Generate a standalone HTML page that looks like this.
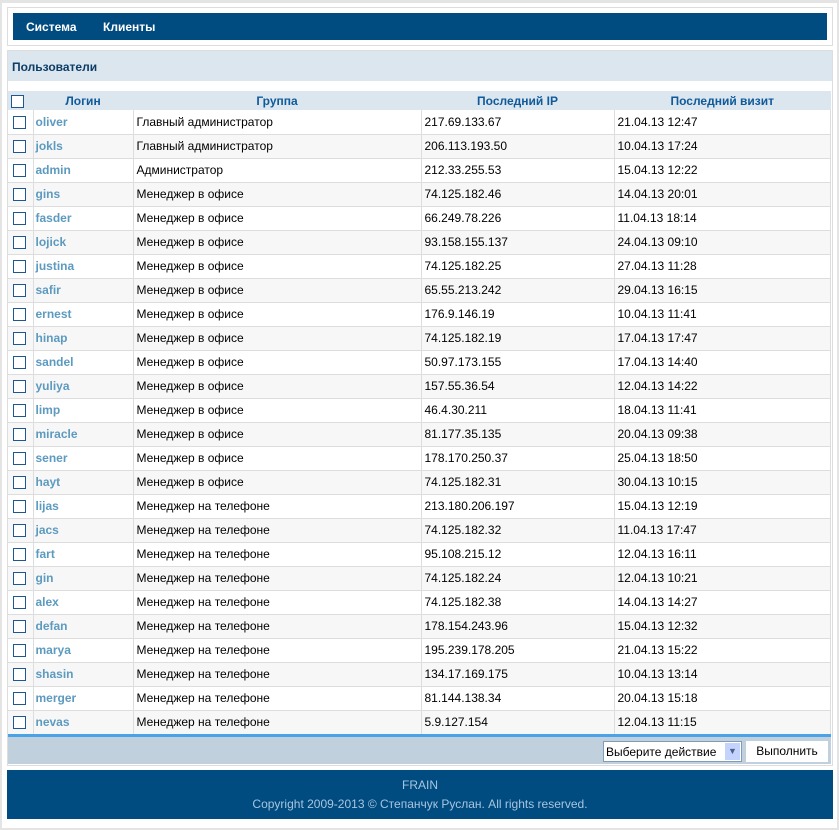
<!DOCTYPE html>
<html><head><meta charset="utf-8"><style>
*{margin:0;padding:0;box-sizing:border-box}
body{width:839px;height:830px;background:#fff;font-family:"Liberation Sans",Arial,sans-serif;font-size:12px;position:relative;overflow:hidden}
.outer{position:absolute;left:0;top:0;width:839px;height:830px;border:2px solid #e4e4e4;border-top-width:3px}
.navbox{position:absolute;left:7px;top:7px;width:826px;height:39px;border:1px solid #ddd}
.nav{position:absolute;left:13px;top:13px;width:814px;height:27px;background:#004b80;color:#fff;font-weight:bold;font-size:12px}
.nav span{position:absolute;top:7px}
.panel{position:absolute;left:7px;top:50px;width:826px;height:716px;border:1px solid #ddd}
.title{position:absolute;left:8px;top:51px;width:824px;height:30px;background:#dce6ef;color:#0c3d66;font-weight:bold;font-size:12px;padding:9px 0 0 4px}
table{position:absolute;left:8px;top:91px;width:823px;border-collapse:collapse}
td,th{height:24px;border-right:1px solid #ddd;border-bottom:1px solid #ddd;padding:0 3px;font-size:12px;text-align:left;white-space:nowrap}
th{height:19px;background:#dce6ef;color:#0f5a9a;font-weight:bold;text-align:center;border-bottom:0;border-right:0}
tr:nth-child(odd) td{background:#f7f7f7}
td.c{width:25px;padding:0 0 0 5px}
td.l{width:100px;color:#5c9ac0;font-weight:bold;padding-left:2px}
td.g{width:288px}
td.i{width:193px}
.cb{display:inline-block;width:13px;height:13px;border:1px solid #1d5890;background:#fff;vertical-align:middle}
th .cb{margin-left:-2px}
.blue{position:absolute;left:8px;top:734px;width:823px;height:3px;background:#4aa3e6}
.act{position:absolute;left:8px;top:737px;width:823px;height:27px;background:#c0d0dc}
.sel{position:absolute;left:603px;top:741px;width:139px;height:21px;border:1px solid #7f9db9;background:#fff;font-size:12px;padding:3px 0 0 2px}
.sel i{position:absolute;right:1px;top:1px;width:15px;height:17px;background:#c3d3fd;color:#4d6185;font-style:normal;font-size:9px;text-align:center;line-height:17px}
.btn{position:absolute;left:746px;top:741px;width:82px;height:21px;background:#fff;font-size:12px;text-align:center;padding-top:3px}
.foot{position:absolute;left:7px;top:770px;width:826px;height:49px;background:#004b80;color:#a7c5df;text-align:center;font-size:12px}
</style></head><body>
<div class="outer"></div>
<div class="navbox"></div>
<div class="nav"><span style="left:13px">Система</span><span style="left:90px">Клиенты</span></div>
<div class="panel"></div>
<div class="title">Пользователи</div>
<table>
<tr><th style="width:25px;text-align:left;padding-left:5px"><span class="cb"></span></th><th>Логин</th><th>Группа</th><th>Последний IP</th><th>Последний визит</th></tr>
<tr><td class="c"><span class="cb"></span></td><td class="l">oliver</td><td class="g">Главный администратор</td><td class="i">217.69.133.67</td><td>21.04.13 12:47</td></tr>
<tr><td class="c"><span class="cb"></span></td><td class="l">jokls</td><td class="g">Главный администратор</td><td class="i">206.113.193.50</td><td>10.04.13 17:24</td></tr>
<tr><td class="c"><span class="cb"></span></td><td class="l">admin</td><td class="g">Администратор</td><td class="i">212.33.255.53</td><td>15.04.13 12:22</td></tr>
<tr><td class="c"><span class="cb"></span></td><td class="l">gins</td><td class="g">Менеджер в офисе</td><td class="i">74.125.182.46</td><td>14.04.13 20:01</td></tr>
<tr><td class="c"><span class="cb"></span></td><td class="l">fasder</td><td class="g">Менеджер в офисе</td><td class="i">66.249.78.226</td><td>11.04.13 18:14</td></tr>
<tr><td class="c"><span class="cb"></span></td><td class="l">lojick</td><td class="g">Менеджер в офисе</td><td class="i">93.158.155.137</td><td>24.04.13 09:10</td></tr>
<tr><td class="c"><span class="cb"></span></td><td class="l">justina</td><td class="g">Менеджер в офисе</td><td class="i">74.125.182.25</td><td>27.04.13 11:28</td></tr>
<tr><td class="c"><span class="cb"></span></td><td class="l">safir</td><td class="g">Менеджер в офисе</td><td class="i">65.55.213.242</td><td>29.04.13 16:15</td></tr>
<tr><td class="c"><span class="cb"></span></td><td class="l">ernest</td><td class="g">Менеджер в офисе</td><td class="i">176.9.146.19</td><td>10.04.13 11:41</td></tr>
<tr><td class="c"><span class="cb"></span></td><td class="l">hinap</td><td class="g">Менеджер в офисе</td><td class="i">74.125.182.19</td><td>17.04.13 17:47</td></tr>
<tr><td class="c"><span class="cb"></span></td><td class="l">sandel</td><td class="g">Менеджер в офисе</td><td class="i">50.97.173.155</td><td>17.04.13 14:40</td></tr>
<tr><td class="c"><span class="cb"></span></td><td class="l">yuliya</td><td class="g">Менеджер в офисе</td><td class="i">157.55.36.54</td><td>12.04.13 14:22</td></tr>
<tr><td class="c"><span class="cb"></span></td><td class="l">limp</td><td class="g">Менеджер в офисе</td><td class="i">46.4.30.211</td><td>18.04.13 11:41</td></tr>
<tr><td class="c"><span class="cb"></span></td><td class="l">miracle</td><td class="g">Менеджер в офисе</td><td class="i">81.177.35.135</td><td>20.04.13 09:38</td></tr>
<tr><td class="c"><span class="cb"></span></td><td class="l">sener</td><td class="g">Менеджер в офисе</td><td class="i">178.170.250.37</td><td>25.04.13 18:50</td></tr>
<tr><td class="c"><span class="cb"></span></td><td class="l">hayt</td><td class="g">Менеджер в офисе</td><td class="i">74.125.182.31</td><td>30.04.13 10:15</td></tr>
<tr><td class="c"><span class="cb"></span></td><td class="l">lijas</td><td class="g">Менеджер на телефоне</td><td class="i">213.180.206.197</td><td>15.04.13 12:19</td></tr>
<tr><td class="c"><span class="cb"></span></td><td class="l">jacs</td><td class="g">Менеджер на телефоне</td><td class="i">74.125.182.32</td><td>11.04.13 17:47</td></tr>
<tr><td class="c"><span class="cb"></span></td><td class="l">fart</td><td class="g">Менеджер на телефоне</td><td class="i">95.108.215.12</td><td>12.04.13 16:11</td></tr>
<tr><td class="c"><span class="cb"></span></td><td class="l">gin</td><td class="g">Менеджер на телефоне</td><td class="i">74.125.182.24</td><td>12.04.13 10:21</td></tr>
<tr><td class="c"><span class="cb"></span></td><td class="l">alex</td><td class="g">Менеджер на телефоне</td><td class="i">74.125.182.38</td><td>14.04.13 14:27</td></tr>
<tr><td class="c"><span class="cb"></span></td><td class="l">defan</td><td class="g">Менеджер на телефоне</td><td class="i">178.154.243.96</td><td>15.04.13 12:32</td></tr>
<tr><td class="c"><span class="cb"></span></td><td class="l">marya</td><td class="g">Менеджер на телефоне</td><td class="i">195.239.178.205</td><td>21.04.13 15:22</td></tr>
<tr><td class="c"><span class="cb"></span></td><td class="l">shasin</td><td class="g">Менеджер на телефоне</td><td class="i">134.17.169.175</td><td>10.04.13 13:14</td></tr>
<tr><td class="c"><span class="cb"></span></td><td class="l">merger</td><td class="g">Менеджер на телефоне</td><td class="i">81.144.138.34</td><td>20.04.13 15:18</td></tr>
<tr><td class="c"><span class="cb"></span></td><td class="l">nevas</td><td class="g">Менеджер на телефоне</td><td class="i">5.9.127.154</td><td>12.04.13 11:15</td></tr>
</table>
<div class="blue"></div>
<div class="act"></div>
<div class="sel">Выберите действие<i>&#9660;</i></div>
<div class="btn">Выполнить</div>
<div class="foot"><div style="padding-top:8px">FRAIN</div><div style="padding-top:5px">Copyright 2009-2013 © Степанчук Руслан. All rights reserved.</div></div>
</body></html>
